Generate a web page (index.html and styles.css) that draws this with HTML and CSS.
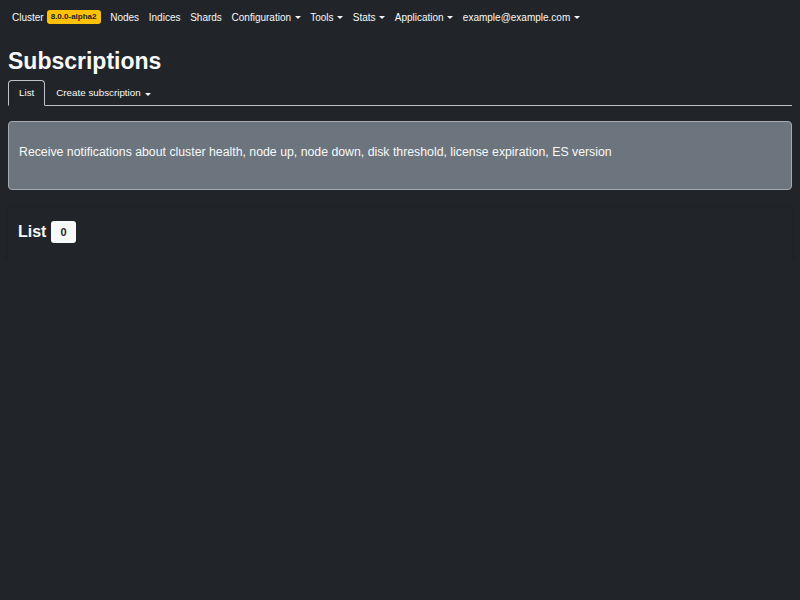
FILE: index.html
```html
<!DOCTYPE html>
<html lang="en">
<head>
<meta charset="utf-8">
<title>Subscriptions</title>
<link rel="stylesheet" href="styles.css">
</head>
<body>
<nav class="navbar">
  <a class="nav-link">Cluster <span class="badge-warn">8.0.0-alpha2</span></a>
  <a class="nav-link">Nodes</a>
  <a class="nav-link">Indices</a>
  <a class="nav-link">Shards</a>
  <a class="nav-link dropdown">Configuration</a>
  <a class="nav-link dropdown">Tools</a>
  <a class="nav-link dropdown">Stats</a>
  <a class="nav-link dropdown">Application</a>
  <a class="nav-link dropdown">example@example.com</a>
</nav>
<main class="container">
  <h1 class="title">Subscriptions</h1>
  <ul class="tabs">
    <li class="tab active">List</li>
    <li class="tab dropdown">Create subscription</li>
  </ul>
  <div class="alert">
    <p>Receive notifications about cluster health, node up, node down, disk threshold, license expiration, ES version</p>
  </div>
  <section class="card">
    <h2 class="card-title">List <span class="badge-light">0</span></h2>
  </section>
</main>
</body>
</html>
```
FILE: styles.css
```css
* { box-sizing: border-box; }
html, body { margin: 0; padding: 0; }
body {
  background: #212529;
  color: #dee2e6;
  font-family: "Liberation Sans", Arial, Helvetica, sans-serif;
  font-size: 12.3px;
  line-height: 1.5;
}
.navbar {
  display: flex;
  align-items: center;
  height: 34px;
  padding: 0 0 0 12px;
  gap: 9.7px;
  font-size: 10px;
}
.nav-link {
  color: #f8f9fa;
  display: inline-flex;
  align-items: center;
  gap: 3px;
}
.dropdown::after {
  content: "";
  display: inline-block;
  margin-left: 4px;
  border-top: 3.5px solid currentColor;
  border-left: 3px solid transparent;
  border-right: 3px solid transparent;
}
.nav-link.dropdown::after { margin-left: 0.5px; }
.badge-warn {
  background: #ffc107;
  color: #212529;
  font-weight: bold;
  font-size: 8px;
  padding: 2px 4px;
  border-radius: 3px;
  line-height: 1.2;
}
.container { padding: 0 8px; }
.title {
  margin: 14px 0 4px;
  font-size: 23px;
  font-weight: bold;
  line-height: 1.2;
  color: #f8f9fa;
}
.tabs {
  list-style: none;
  margin: 0;
  padding: 0;
  display: flex;
  border-bottom: 1px solid #bfc3c7;
  font-size: 9.8px;
}
.tab {
  padding: 6px 10px 6px;
  margin-bottom: -1px;
  border: 1px solid transparent;
  border-radius: 4px 4px 0 0;
  color: #f8f9fa;
  line-height: 1.3;
}
.tab.active {
  border-color: #bfc3c7 #bfc3c7 #212529;
  background: #212529;
}
.alert {
  margin-top: 15px;
  background: #6c757d;
  border: 1px solid #a3a9ae;
  border-radius: 4px;
  padding: 21px 10px 10px;
  color: #f8f9fa;
}
.alert p { margin: 0 0 17px; line-height: 19px; }
.card {
  margin-top: 17px;
  padding: 10px 10px 14px;
  box-shadow: 0 1px 4px rgba(0,0,0,0.22);
  border-radius: 4px;
}
.card-title {
  margin: 0;
  font-size: 16px;
  font-weight: bold;
  color: #f8f9fa;
  display: flex;
  align-items: center;
  gap: 5px;
  line-height: 29px;
}
.badge-light {
  background: #f8f9fa;
  color: #212529;
  font-size: 11px;
  font-weight: bold;
  border-radius: 3px;
  padding: 0 9px;
  line-height: 22px;
}
```
